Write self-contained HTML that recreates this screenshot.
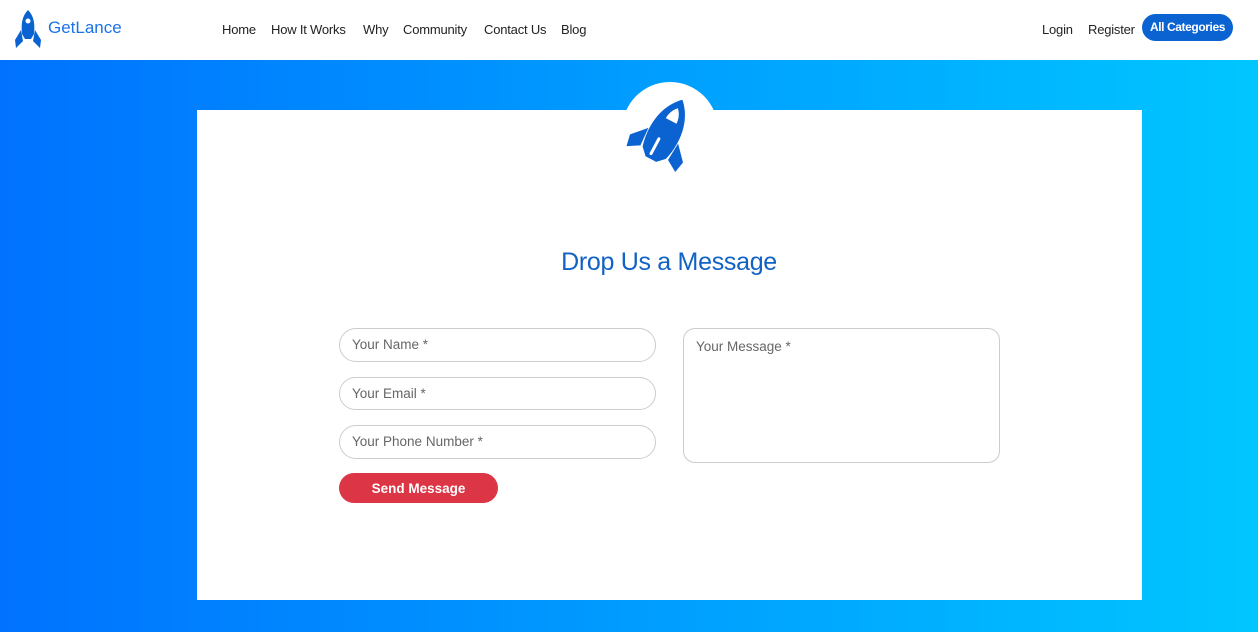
<!DOCTYPE html>
<html><head><style>
*{box-sizing:border-box;margin:0;padding:0}
body{width:1258px;height:632px;overflow:hidden;font-family:"Liberation Sans",sans-serif;background:linear-gradient(90deg,#0072ff,#00c6ff);position:relative}
.nav{position:absolute;top:0;left:0;width:1258px;height:60px;background:#fff}
.logo{position:absolute;left:14px;top:10px}
.brand{position:absolute;left:48px;top:18px;font-size:17px;color:#1a73e8}
.links a{position:absolute;top:22px;font-size:13px;color:#222;text-decoration:none;letter-spacing:-0.2px}
.btn{position:absolute;left:1142px;top:14px;width:91px;height:27px;border-radius:14px;background:#0a63d1;color:#fff;font-size:12px;font-weight:bold;text-align:center;line-height:27px;letter-spacing:-0.4px}
.card{position:absolute;left:197px;top:110px;width:945px;height:490px;background:#fff}
.circ{position:absolute;left:622px;top:82px;width:96px;height:96px;border-radius:50%;background:#fff}
h1{position:absolute;top:248px;left:40px;width:1258px;text-align:center;font-size:25px;font-weight:normal;color:#1062c4;letter-spacing:-0.3px}
.in{position:absolute;border:1px solid #ccc;border-radius:17px;background:#fff;font-size:13.5px;color:#666;padding-left:12px;line-height:32px}
.send{position:absolute;left:339px;top:473px;width:159px;height:30px;border-radius:15px;background:#dc3545;color:#fff;font-size:13.5px;font-weight:bold;text-align:center;line-height:31px}
</style></head><body>
<div class="nav">
<svg class="logo" width="28" height="38" viewBox="0 0 28 38"><path d="M14 0C8 6 7 14 8 24L11 29H17L20 24C21 14 20 6 14 0Z" fill="#0a63d1"/><circle cx="14" cy="11" r="2.5" fill="#fff"/><path d="M7 20L1 30L2 38L9 31Z M21 20L27 30L26 38L19 31Z" fill="#0a63d1"/></svg>
<div class="brand">GetLance</div>
<div class="links"><a style="left:222px">Home</a><a style="left:271px">How It Works</a><a style="left:363px">Why</a><a style="left:403px">Community</a><a style="left:484px">Contact Us</a><a style="left:561px">Blog</a><a style="left:1042px">Login</a><a style="left:1088px">Register</a></div>
<div class="btn">All Categories</div>
</div>
<div class="card"></div>
<div class="circ"></div>
<svg style="position:absolute;left:619px;top:92px" width="84" height="96" viewBox="0 0 70 80"><g transform="rotate(28 35 40)"><path d="M35 2C22 14 19 34 24 52L30 58H40L46 52C51 34 48 14 35 2Z" fill="#0a63d1"/><path d="M35 10C31 14 30 19 30 22H40C40 19 39 14 35 10Z" fill="#fff"/><path d="M33 40V54" stroke="#fff" stroke-width="2.5" stroke-linecap="round"/><path d="M21 36L10 48L12 58L22 52Z M49 36L60 48L58 58L48 52Z" fill="#0a63d1"/></g></svg>
<h1>Drop Us a Message</h1>
<div class="in" style="left:339px;top:328px;width:317px;height:34px">Your Name *</div>
<div class="in" style="left:339px;top:377px;width:317px;height:33px">Your Email *</div>
<div class="in" style="left:339px;top:425px;width:317px;height:34px">Your Phone Number *</div>
<div class="in" style="left:683px;top:328px;width:317px;height:135px;border-radius:12px;line-height:36px">Your Message *</div>
<div class="send">Send Message</div>
</body></html>
